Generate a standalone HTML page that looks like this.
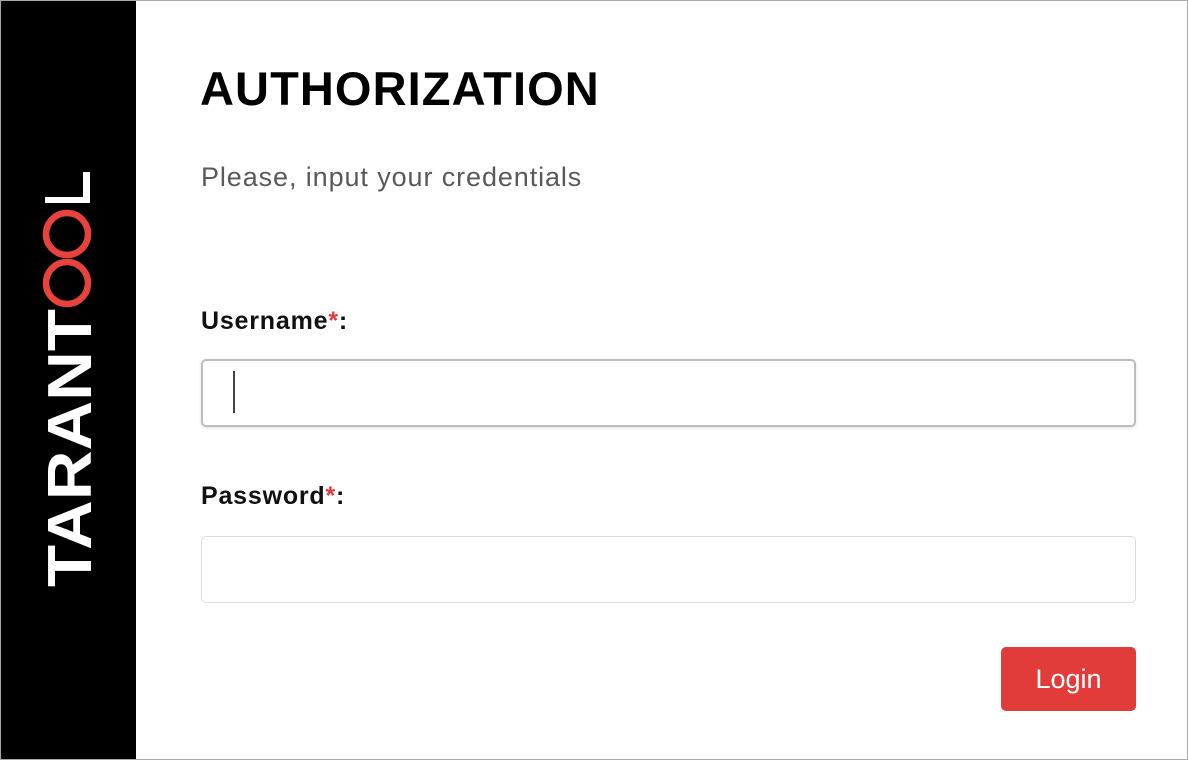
<!DOCTYPE html>
<html><head><meta charset="utf-8"><style>
html,body{margin:0;padding:0;}
body{width:1188px;height:760px;position:relative;background:#fff;font-family:"Liberation Sans",sans-serif;overflow:hidden;}
.frame{position:absolute;left:0;top:0;width:1186px;height:758px;border:1px solid #a9a9a9;}
.side{position:absolute;left:1px;top:1px;width:135px;height:758px;background:#000;}
.h{position:absolute;left:200px;top:61px;font-size:47px;font-weight:bold;color:#000;letter-spacing:1.1px;white-space:nowrap;}
.sub{position:absolute;left:201px;top:162px;font-size:27px;color:#595959;white-space:nowrap;letter-spacing:0.9px;}
.lbl{position:absolute;left:201px;font-size:25px;font-weight:bold;color:#111;white-space:nowrap;letter-spacing:0.8px;}
.lbl span{color:#e23c3a;}
.inp{position:absolute;left:201px;width:935px;height:64px;border:1px solid #dcdcdc;border-radius:5px;box-sizing:border-box;}
.inp.f{border:2px solid #bdbdbd;box-shadow:0 1px 3px rgba(0,0,0,.12);}
.cur{position:absolute;left:233px;top:371px;width:2px;height:42px;background:#444;}
.btn{position:absolute;left:1001px;top:647px;width:135px;height:64px;background:#e23c3a;border-radius:5px;color:#fff;font-size:27px;text-align:center;line-height:64px;}
</style></head><body>
<div class="frame"></div>
<div class="side">
<svg width="135" height="758" style="position:absolute;left:-1px;top:-1px">
<text transform="translate(91,587) rotate(-90)" font-family="Liberation Sans" font-weight="bold" font-size="62" fill="#fff" textLength="278" lengthAdjust="spacingAndGlyphs">TARANT</text>
<circle cx="67" cy="234" r="21" fill="none" stroke="#e8423c" stroke-width="6.5"/>
<circle cx="67" cy="283" r="21" fill="none" stroke="#e8423c" stroke-width="6.5"/>
<path d="M45 197 H83 V172 H90 V203 H45 Z" fill="#fff"/>
</svg>
</div>
<div class="h">AUTHORIZATION</div>
<div class="sub">Please, input your credentials</div>
<div class="lbl" style="top:307px">Username<span>*</span>:</div>
<div class="inp f" style="top:359px;height:68px"></div>
<div class="cur"></div>
<div class="lbl" style="top:482px">Password<span>*</span>:</div>
<div class="inp" style="top:536px;height:67px"></div>
<div class="btn">Login</div>
</body></html>
